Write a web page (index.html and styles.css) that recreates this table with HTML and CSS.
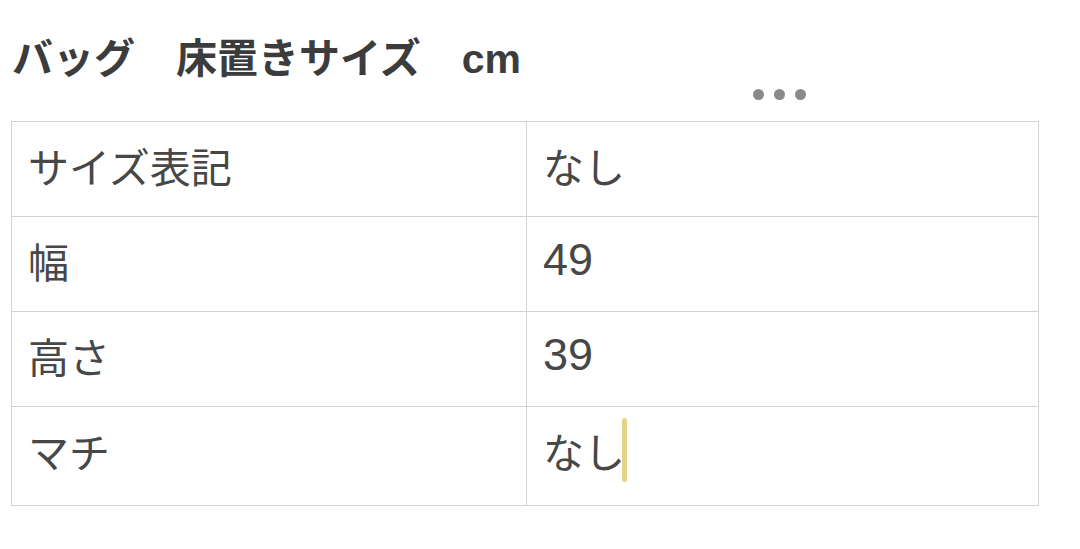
FILE: index.html
```html
<!DOCTYPE html>
<html lang="ja">
<head>
<meta charset="utf-8">
<link rel="stylesheet" href="styles.css">
</head>
<body>
<div class="page">
  <h1 class="title">バッグ　床置きサイズ　cm</h1>
  <div class="handle"><span class="dot"></span><span class="dot"></span><span class="dot"></span></div>
  <table class="size-table">
    <tr><td class="label">サイズ表記</td><td class="value">なし</td></tr>
    <tr><td class="label">幅</td><td class="value num">49</td></tr>
    <tr><td class="label">高さ</td><td class="value num">39</td></tr>
    <tr class="last"><td class="label">マチ</td><td class="value">なし<span class="caret"></span></td></tr>
  </table>
</div>
</body>
</html>
```

FILE: styles.css
```css
html, body {
  margin: 0;
  padding: 0;
  background: #ffffff;
}
.page {
  width: 1080px;
  height: 549px;
  font-family: "Noto Sans CJK JP", "Noto Sans", sans-serif;
  color: #444444;
  padding: 0 0 0 11px;
  box-sizing: border-box;
}
.title {
  margin: 0;
  padding: 37px 0 0 1px;
  height: 45px;
  font-family: "Liberation Sans", "Noto Sans CJK JP", sans-serif;
  font-size: 41px;
  line-height: 45px;
  font-weight: 700;
  color: #3c3c3c;
}
.handle {
  display: flex;
  justify-content: center;
  align-items: flex-start;
  gap: 10px;
  width: 1028px;
  padding: 7px 0 0 508px;
  box-sizing: border-box;
  height: 39px;
}
.dot {
  width: 11px;
  height: 11px;
  border-radius: 50%;
  background: #8a8a8a;
}
.size-table {
  border-collapse: collapse;
  width: 1028px;
  table-layout: fixed;
}
.size-table td {
  border: 1px solid #d2d2d2;
  height: 95px;
  padding: 0 0 8px 16px;
  box-sizing: border-box;
  font-size: 41px;
  color: #474747;
  vertical-align: middle;
}
.size-table tr.last td {
  height: 99px;
  padding-bottom: 12px;
}
.size-table td.label {
  width: 515px;
}
.size-table td.value {
  position: relative;
}
.size-table td.num {
  font-family: "Liberation Sans", "Noto Sans", sans-serif;
  font-size: 45px;
}
.caret {
  position: absolute;
  display: inline-block;
  width: 5px;
  height: 64px;
  border-radius: 3px;
  background: #e6d38a;
  margin-left: -3px;
  top: 11px;
}
```
